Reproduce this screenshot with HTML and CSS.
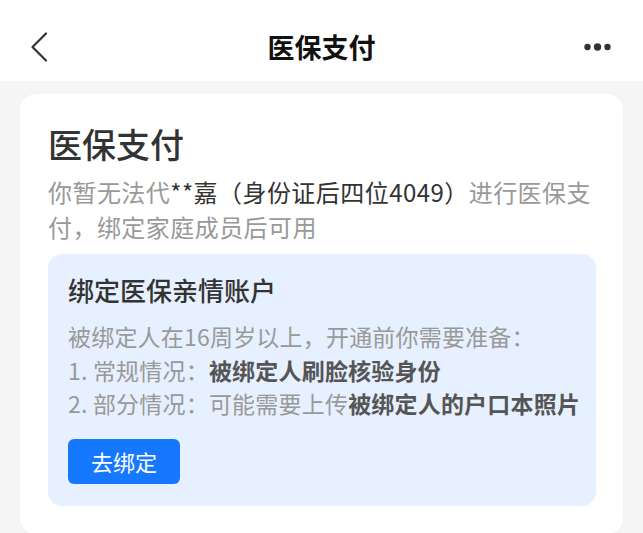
FILE: index.html
```html
<!DOCTYPE html>
<html lang="zh-CN">
<head>
<meta charset="utf-8">
<title>医保支付</title>
<link rel="stylesheet" href="styles.css">
</head>
<body>
<div class="page">
  <header class="navbar">
    <div class="nav-row">
      <button class="nav-back" aria-label="返回">
        <svg width="18" height="30" viewBox="0 0 18 30"><path d="M16 1.5 L2.5 15 L16 28.5" fill="none" stroke="#333" stroke-width="2.2" stroke-linecap="round" stroke-linejoin="round"/></svg>
      </button>
      <div class="nav-title">医保支付</div>
      <button class="nav-more" aria-label="更多">
        <svg width="28" height="10" viewBox="0 0 28 10"><circle cx="3.5" cy="5" r="3.2" fill="#333"/><circle cx="13.5" cy="5" r="3.7" fill="#333"/><circle cx="23.5" cy="5" r="3.2" fill="#333"/></svg>
      </button>
    </div>
  </header>
  <main class="content">
    <section class="card">
      <h1 class="card-title">医保支付</h1>
      <p class="card-desc">你暂无法代<span class="dark">**嘉（身份证后四位4049）</span>进行医保支付，绑定家庭成员后可用</p>
      <div class="bind-box">
        <h2 class="bind-title">绑定医保亲情账户</h2>
        <ul class="bind-list">
          <li>被绑定人在16周岁以上，开通前你需要准备：</li>
          <li>1. 常规情况：<b>被绑定人刷脸核验身份</b></li>
          <li>2. 部分情况：可能需要上传<b>被绑定人的户口本照片</b></li>
        </ul>
        <button class="bind-btn">去绑定</button>
      </div>
    </section>
  </main>
</div>
</body>
</html>
```
FILE: styles.css
```css
* { box-sizing: border-box; }
html, body { margin: 0; padding: 0; }
body {
  background: #f5f5f5;
  font-family: "Noto Sans CJK SC", "Noto Sans", sans-serif;
  color: #333;
  width: 643px;
  height: 533px;
  overflow: hidden;
}
.navbar {
  background: #fff;
  height: 81px;
  padding-top: 12px;
}
.nav-row {
  height: 70px;
  display: flex;
  align-items: center;
  justify-content: space-between;
  padding: 0 31px 0 30px;
  position: relative;
}
.nav-back, .nav-more {
  border: 0;
  background: none;
  padding: 0;
  display: flex;
  align-items: center;
}
.nav-title {
  position: absolute;
  left: 0;
  right: 0;
  text-align: center;
  font-size: 27px;
  font-weight: 700;
  color: #111;
  line-height: 70px;
  pointer-events: none;
}
.content {
  padding: 13px 20px 0;
}
.card {
  background: #fff;
  border-radius: 16px;
  padding: 28px 27px 28px 28px;
}
.card-title {
  margin: 0;
  font-size: 34px;
  line-height: 44px;
  font-weight: 500;
  color: #333;
}
.card-desc {
  margin: 8px 0 0;
  font-size: 24px;
  line-height: 35px;
  letter-spacing: 0.45px;
  color: #999;
}
.card-desc .dark { color: #333; }
.bind-box {
  margin-top: 10px;
  background: #e6f0ff;
  border-radius: 14px;
  padding: 18px 20px 22px;
}
.bind-title {
  margin: 0;
  font-size: 26px;
  line-height: 36px;
  font-weight: 500;
  color: #333;
}
.bind-list {
  list-style: none;
  margin: 12px 0 0;
  padding: 0;
  font-size: 23px;
  line-height: 33.5px;
  letter-spacing: 0.2px;
  color: #999;
  white-space: nowrap;
}
.bind-list b { color: #555; font-weight: 700; }
.bind-btn {
  margin-top: 18px;
  width: 112px;
  height: 45px;
  border: 0;
  border-radius: 6px;
  background: #1677ff;
  color: #fff;
  font-family: inherit;
  font-size: 22px;
  padding: 0;
}
```
